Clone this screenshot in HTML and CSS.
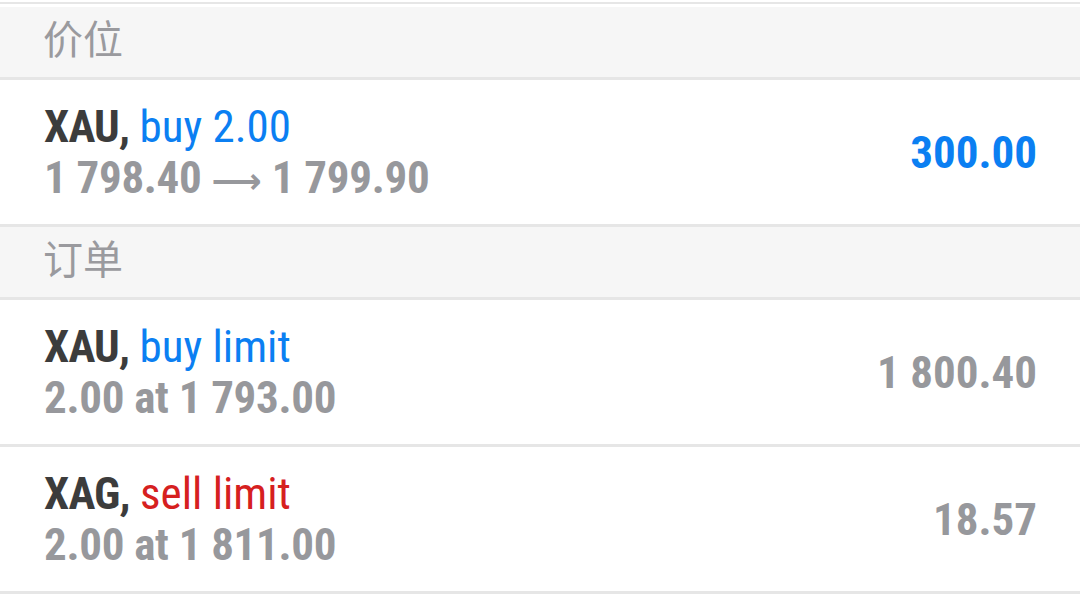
FILE: index.html
```html
<!DOCTYPE html>
<html lang="zh">
<head>
<meta charset="utf-8">
<link rel="stylesheet" href="styles.css">
</head>
<body>
<div class="list">
  <div class="gap"></div>
  <div class="header">价位</div>
  <div class="row">
    <div class="info">
      <div class="title"><b class="sym">XAU,</b> <span class="buy">buy 2.00</span></div>
      <div class="sub">1 798.40 <span class="arrow">⟶</span> 1 799.90</div>
    </div>
    <div class="value profit">300.00</div>
  </div>
  <div class="header">订单</div>
  <div class="row">
    <div class="info">
      <div class="title"><b class="sym">XAU,</b> <span class="buy">buy limit</span></div>
      <div class="sub">2.00 at 1 793.00</div>
    </div>
    <div class="value">1 800.40</div>
  </div>
  <div class="row">
    <div class="info">
      <div class="title"><b class="sym">XAG,</b> <span class="sell">sell limit</span></div>
      <div class="sub">2.00 at 1 811.00</div>
    </div>
    <div class="value">18.57</div>
  </div>
</div>
</body>
</html>
```
FILE: styles.css
```css
html, body {
  margin: 0;
  padding: 0;
  background: #ffffff;
}
body {
  padding-top: 2px;
  font-family: "Roboto Condensed", Roboto, "Noto Sans CJK SC", sans-serif;
}
.list {
  display: flex;
  flex-direction: column;
}
.gap {
  height: 3px;
  border-top: 2px solid #e6e6e6;
  background: #ffffff;
}
.header {
  background: #f6f6f6;
  border-bottom: 3px solid #e6e6e6;
  box-sizing: border-box;
  height: 73px;
  padding: 0 44px 11px 43px;
  display: flex;
  align-items: center;
  font-family: "Noto Sans CJK SC", sans-serif;
  font-size: 40px;
  font-weight: 400;
  color: #9a9a9e;
}
.row {
  height: 147px;
  box-sizing: border-box;
  border-bottom: 3px solid #e6e6e6;
  padding: 0 43px 0 44px;
  display: flex;
  align-items: center;
  justify-content: space-between;
}
.info {
  display: flex;
  flex-direction: column;
}
.title, .sub {
  font-size: 45px;
  line-height: 51px;
  height: 51px;
  white-space: nowrap;
}
.title {
  color: #3c3c3c;
  font-weight: 400;
}
.sym {
  font-weight: 700;
  letter-spacing: -0.8px;
}
.buy {
  color: #0b7ff2;
}
.sell {
  color: #d6201f;
}
.sub {
  color: #97989c;
  font-weight: 700;
  letter-spacing: -0.3px;
}
.arrow {
  font-family: "DejaVu Sans", sans-serif;
  font-weight: 700;
  font-size: 35px;
  letter-spacing: 0;
}
.value {
  font-size: 45px;
  font-weight: 700;
  color: #97989c;
}
.value.profit {
  color: #0b7ff2;
}
```
